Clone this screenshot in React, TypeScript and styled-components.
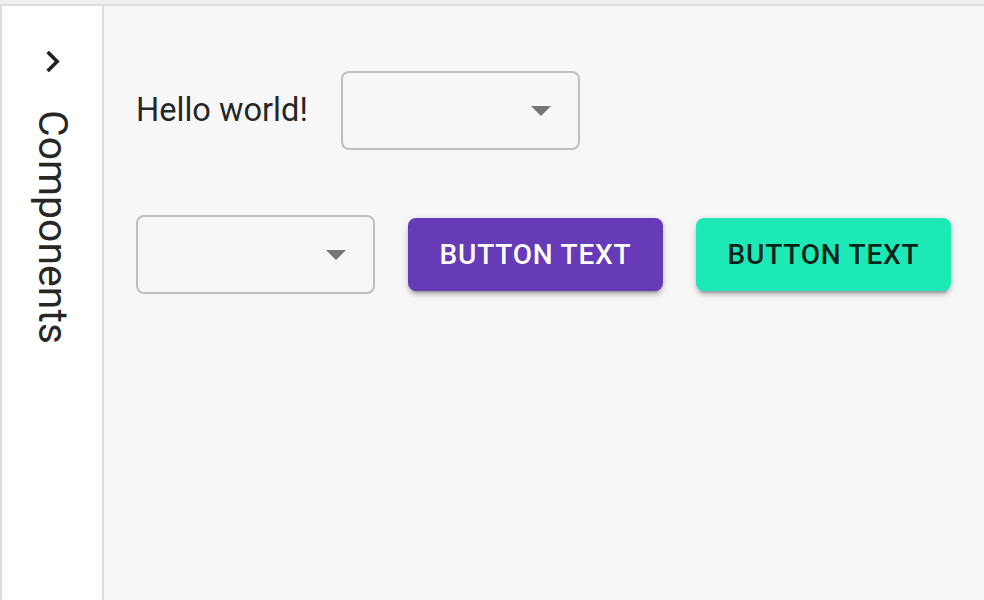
import React from "react";
import styled, { createGlobalStyle } from "styled-components";

const Global = createGlobalStyle`
  html, body { margin: 0; padding: 0; height: 100%; }
  body {
    background: #efefef;
    font-family: Roboto, "Liberation Sans", Arial, sans-serif;
    color: rgba(0,0,0,0.87);
  }
  #root { height: 100%; }
`;

const Page = styled.div`
  height: 100%;
  box-sizing: border-box;
  padding-top: 4px;
  display: flex;
  flex-direction: column;
`;

const Frame = styled.div`
  flex: 1;
  display: flex;
  border-top: 2px solid #dcdcdc;
  border-left: 2px solid #dcdcdc;
  min-height: 0;
`;

const Sidebar = styled.aside`
  width: 100px;
  flex-shrink: 0;
  background: #ffffff;
  border-right: 2px solid #dcdcdc;
  display: flex;
  flex-direction: column;
  align-items: center;
  padding-top: 34px;
  gap: 27px;
`;

const ToggleIcon = styled.svg`
  width: 43px;
  height: 43px;
  fill: #212121;
  display: block;
`;

const SideTitle = styled.div`
  writing-mode: vertical-rl;
  font-size: 41px;
  line-height: 1;
  font-weight: 400;
  color: rgba(0,0,0,0.87);
`;

const Main = styled.main`
  flex: 1;
  background: #f7f7f7;
  padding: 65px 32px;
  display: flex;
  flex-direction: column;
  gap: 65px;
`;

const Row = styled.div`
  display: flex;
  align-items: center;
  gap: 33px;
`;

const Label = styled.span`
  font-size: 32.6px;
  line-height: 1.5;
  color: rgba(0,0,0,0.87);
`;

const SelectBox = styled.div`
  width: 239px;
  height: 79px;
  box-sizing: border-box;
  border: 2px solid #bfbfbf;
  border-radius: 8px;
  display: flex;
  align-items: center;
  justify-content: flex-end;
  padding-right: 27px;
`;

const Arrow = styled.svg`
  width: 20px;
  height: 10px;
  fill: #757575;
  display: block;
`;

const Button = styled.button<{ $bg: string; $fg: string }>`
  width: 255px;
  height: 73px;
  border: none;
  border-radius: 8px;
  background: ${(p) => p.$bg};
  color: ${(p) => p.$fg};
  font-family: Roboto, "Liberation Sans", Arial, sans-serif;
  font-size: 28px;
  font-weight: 500;
  letter-spacing: 0.8px;
  text-transform: uppercase;
  box-shadow: 0px 6px 2px -4px rgba(0,0,0,0.2), 0px 4px 4px 0px rgba(0,0,0,0.14), 0px 2px 10px 0px rgba(0,0,0,0.12);
  cursor: pointer;
`;

const Select = () => (
  <SelectBox>
    <Arrow viewBox="7 10 10 5">
      <path d="M7 10l5 5 5-5z" />
    </Arrow>
  </SelectBox>
);

export default function App() {
  return (
    <Page>
      <Global />
      <Frame>
        <Sidebar>
          <ToggleIcon viewBox="0 0 24 24">
            <path d="M10 6 8.59 7.41 13.17 12l-4.58 4.59L10 18l6-6z" />
          </ToggleIcon>
          <SideTitle>Components</SideTitle>
        </Sidebar>
        <Main>
          <Row>
            <Label>Hello world!</Label>
            <Select />
          </Row>
          <Row>
            <Select />
            <Button $bg="#673ab7" $fg="#ffffff">Button Text</Button>
            <Button $bg="#1de9b6" $fg="rgba(0,0,0,0.87)">Button Text</Button>
          </Row>
        </Main>
      </Frame>
    </Page>
  );
}
